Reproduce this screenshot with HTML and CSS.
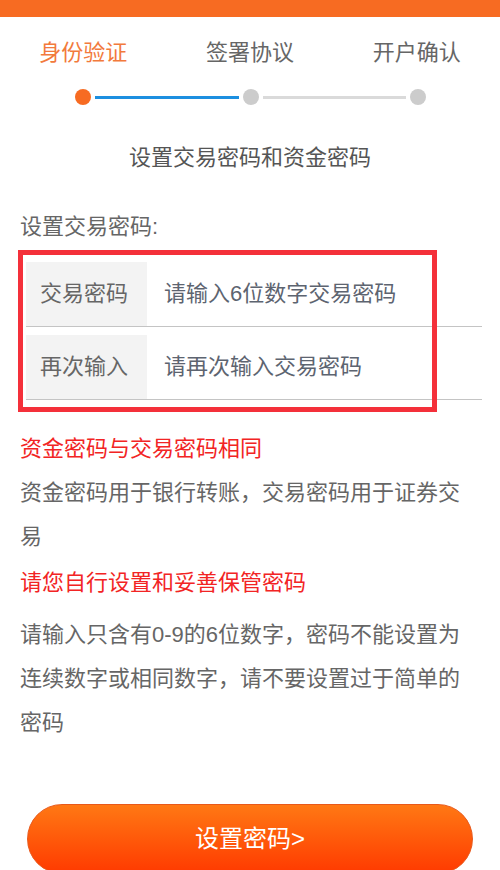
FILE: index.html
```html
<!DOCTYPE html>
<html lang="zh-CN">
<head>
<meta charset="utf-8">
<title>设置密码</title>
<link rel="stylesheet" href="styles.css">
</head>
<body>
<div class="topbar"></div>
<div class="tabs">
  <div class="tab active">身份验证</div>
  <div class="tab">签署协议</div>
  <div class="tab">开户确认</div>
</div>
<div class="steps">
  <span class="dot done"></span>
  <span class="line done"></span>
  <span class="dot"></span>
  <span class="line"></span>
  <span class="dot"></span>
</div>
<div class="subtitle">设置交易密码和资金密码</div>
<div class="section-label">设置交易密码:</div>
<div class="form">
  <div class="row">
    <div class="label">交易密码</div>
    <input class="field" type="password" placeholder="请输入6位数字交易密码">
  </div>
  <div class="row">
    <div class="label">再次输入</div>
    <input class="field" type="password" placeholder="请再次输入交易密码">
  </div>
  <div class="highlight"></div>
</div>
<div class="notes">
  <p class="warn">资金密码与交易密码相同</p>
  <p class="text">资金密码用于银行转账，交易密码用于证券交易</p>
  <p class="warn">请您自行设置和妥善保管密码</p>
  <p class="text rules">请输入只含有0-9的6位数字，密码不能设置为连续数字或相同数字，请不要设置过于简单的密码</p>
</div>
<div class="btn-wrap">
  <button class="btn">设置密码&gt;</button>
</div>
</body>
</html>
```
FILE: styles.css
```css
* { box-sizing: border-box; }
body {
  margin: 0;
  background: #fff;
  font-family: "Liberation Sans", "Noto Sans CJK SC", sans-serif;
  color: #666;
}
.topbar {
  height: 17px;
  background: #f76b22;
}
.tabs {
  display: grid;
  grid-template-columns: 1fr 1fr 1fr;
  padding-top: 21px;
}
.tab {
  text-align: center;
  font-size: 22px;
  line-height: 30px;
  color: #666;
}
.tab.active { color: #f27a3c; }
.steps {
  display: flex;
  align-items: center;
  height: 16px;
  margin-top: 21px;
  padding: 0 74px 0 75px;
}
.dot {
  width: 16px;
  height: 16px;
  border-radius: 50%;
  background: #cccccc;
  flex: none;
}
.dot.done { background: #f76b22; }
.line {
  flex: 1;
  height: 3px;
  margin: 0 4px;
  background: #dadada;
}
.line.done { background: #1c8fe0; }
.subtitle {
  margin-top: 38px;
  text-align: center;
  font-size: 22px;
  line-height: 30px;
  color: #555;
}
.section-label {
  margin-top: 39px;
  padding-left: 20px;
  font-size: 22px;
  line-height: 30px;
  color: #666;
}
.form {
  position: relative;
  margin: 12px 0 0 26px;
  width: 456px;
}
.row {
  display: flex;
  padding-top: 8px;
  border-bottom: 1px solid #c4c4c4;
}
.label {
  width: 121px;
  height: 64px;
  flex: none;
  background: #f3f3f3;
  padding-left: 14px;
  font-size: 22px;
  line-height: 64px;
  color: #666;
}
.field {
  flex: 1;
  min-width: 0;
  border: none;
  outline: none;
  background: transparent;
  padding: 0 0 0 17px;
  font-family: inherit;
  font-size: 22px;
  height: 64px;
  color: #333;
}
.field::placeholder {
  color: #5d6470;
  opacity: 1;
}
.highlight {
  position: absolute;
  left: -8px;
  top: -4px;
  width: 419px;
  height: 162px;
  border: 5px solid #f4303a;
  pointer-events: none;
}
.notes {
  margin-top: 27px;
  padding: 0 20px;
}
.notes p {
  margin: 0;
  font-size: 22px;
  line-height: 44px;
}
.warn { color: #f22424; }
.text { color: #666; }
.notes .rules { margin-top: 8px; }
.notes .text + .warn { margin-top: 2px; }
.btn-wrap {
  margin-top: 59px;
  padding: 0 27px;
}
.btn {
  display: block;
  width: 100%;
  height: 70px;
  border-radius: 35px;
  border: 1px solid #e8581a;
  background: linear-gradient(#ff7814, #ff3a00);
  color: #fff;
  font-family: inherit;
  font-size: 24px;
  line-height: 68px;
  padding: 0;
}
```
